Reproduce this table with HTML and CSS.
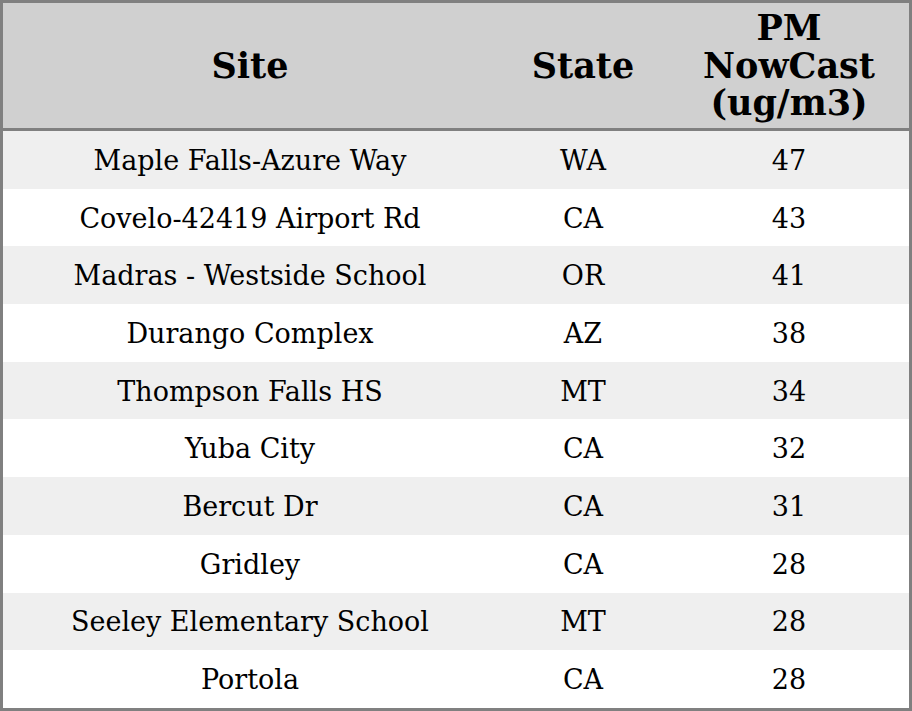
FILE: index.html
```html
<!DOCTYPE html>
<html>
<head>
<meta charset="utf-8">
<link rel="stylesheet" href="styles.css">
</head>
<body>
<table class="aq">
  <thead>
    <tr>
      <th class="c-site">Site</th>
      <th class="c-state">State</th>
      <th class="c-pm">PM<br>NowCast<br>(ug/m3)</th>
    </tr>
  </thead>
  <tbody>
    <tr><td>Maple Falls-Azure Way</td><td>WA</td><td>47</td></tr>
    <tr><td>Covelo-42419 Airport Rd</td><td>CA</td><td>43</td></tr>
    <tr><td>Madras - Westside School</td><td>OR</td><td>41</td></tr>
    <tr><td>Durango Complex</td><td>AZ</td><td>38</td></tr>
    <tr><td>Thompson Falls HS</td><td>MT</td><td>34</td></tr>
    <tr><td>Yuba City</td><td>CA</td><td>32</td></tr>
    <tr><td>Bercut Dr</td><td>CA</td><td>31</td></tr>
    <tr><td>Gridley</td><td>CA</td><td>28</td></tr>
    <tr><td>Seeley Elementary School</td><td>MT</td><td>28</td></tr>
    <tr><td>Portola</td><td>CA</td><td>28</td></tr>
  </tbody>
</table>
</body>
</html>
```
FILE: styles.css
```css
html, body {
  margin: 0;
  padding: 0;
  background: #ffffff;
}
.aq {
  width: 912px;
  border-collapse: separate;
  border-spacing: 0;
  border: 3px solid #808080;
  font-family: "DejaVu Serif", serif;
  color: #000;
  table-layout: fixed;
}
.aq th {
  background: #d0d0d0;
  font-weight: bold;
  font-size: 35px;
  line-height: 37.5px;
  padding: 6px 0 6.5px;
  border-bottom: 3px solid #808080;
  text-align: center;
  vertical-align: middle;
}
.c-site { width: 494px; }
.c-state { width: 172px; }
.c-pm { width: 240px; }
.aq tbody tr {
  height: 57.7px;
}
.aq td {
  font-size: 27px;
  line-height: 30px;
  padding: 2px 0 0;
  text-align: center;
  vertical-align: middle;
}
.aq tbody tr:nth-child(odd) td {
  background: #efefef;
}
```
